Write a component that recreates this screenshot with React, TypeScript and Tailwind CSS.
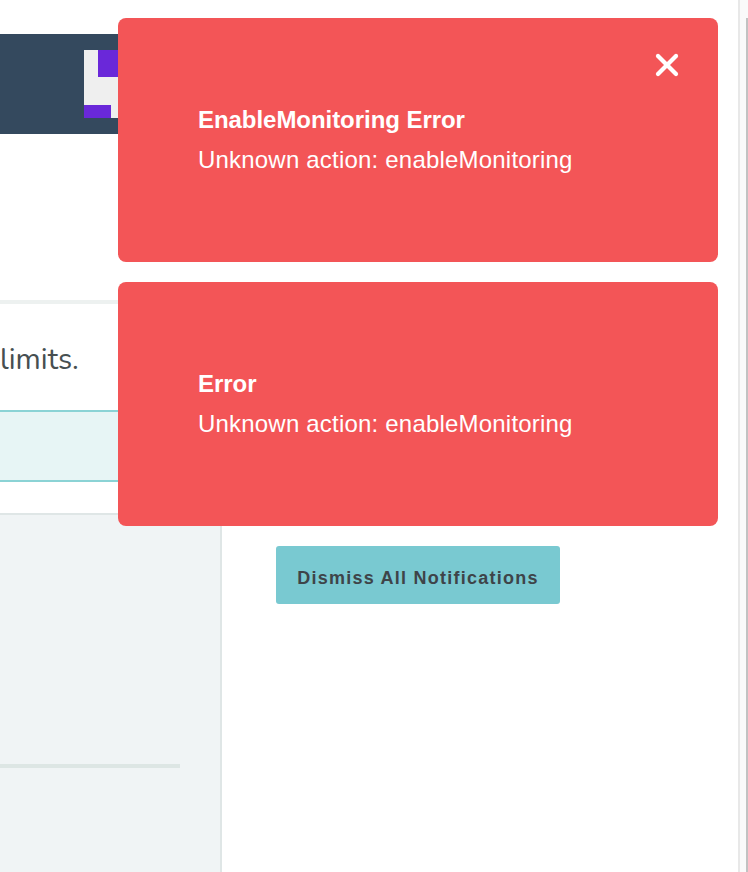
import React from 'react';
import { X } from 'lucide-react';

function Toast({ title, message, onTop }: { title: string; message: string; onTop?: boolean }) {
  return (
    <div className="relative h-[244px] w-[600px] rounded-lg bg-[#f35557] pl-[80px] pt-[87px] text-white">
      {onTop && (
        <span className="absolute right-[33px] top-[29px] text-white">
          <X size={36} strokeWidth={2.8} />
        </span>
      )}
      <div className="text-[24px] leading-[30px] font-bold tracking-[-0.05px]">{title}</div>
      <div className="mt-[10px] text-[24px] leading-[30px] tracking-[0.2px]">{message}</div>
    </div>
  );
}

export default function App() {
  return (
    <div className="relative h-[872px] overflow-hidden bg-white font-['Liberation_Sans',Arial,sans-serif]">
      <div className="flex h-full w-[738px] flex-col pt-[34px]">
        <header className="flex h-[100px] w-[300px] items-start bg-[#34495e] pl-[84px] pt-4">
          <div className="flex h-[68px] w-[68px] flex-col justify-between bg-[#efefef]">
            <div className="ml-[14px] h-[27px] w-[54px] bg-[#6a28d9]" />
            <div className="h-[13px] w-[27px] bg-[#6a28d9]" />
          </div>
        </header>

        <section className="mt-[166px] h-[110px] w-[300px] border-t-4 border-[#edf1f0] pt-[35px]">
          <p className="font-['Nunito','Noto_Sans',sans-serif] text-[29.5px] leading-[40px] text-[#474f51]">limits.</p>
        </section>

        <div className="h-[72px] w-[300px] border-y-2 border-[#8bd3d5] bg-[#e7f5f5]" />

        <div className="mt-[31px] flex min-h-0 flex-1">
          <div className="w-[222px] border-t-2 border-r-2 border-[#dfe6e6] bg-[#f0f4f5] pt-[249px]">
            <div className="h-1 w-[180px] bg-[#dde6e4]" />
          </div>
          <div className="flex-1 pl-[54px] pt-[33px]">
            <button className="h-[58px] w-[284px] rounded-[3px] bg-[#79c9d1] pt-[6px] text-center text-[18px] font-bold tracking-[1.25px] text-[#3e4449]">
              Dismiss All Notifications
            </button>
          </div>
        </div>
      </div>

      <div className="absolute bottom-0 right-0 top-0 w-[10px] border-l-2 border-[#e8e8e8] bg-[#fafafa]">
        <div className="ml-[6px] mt-[18px] h-[854px] w-[2px] bg-[#c2c2c2]" />
      </div>

      <div className="absolute left-[118px] top-[18px] flex flex-col gap-5">
        <Toast onTop title="EnableMonitoring Error" message="Unknown action: enableMonitoring" />
        <Toast title="Error" message="Unknown action: enableMonitoring" />
      </div>
    </div>
  );
}
